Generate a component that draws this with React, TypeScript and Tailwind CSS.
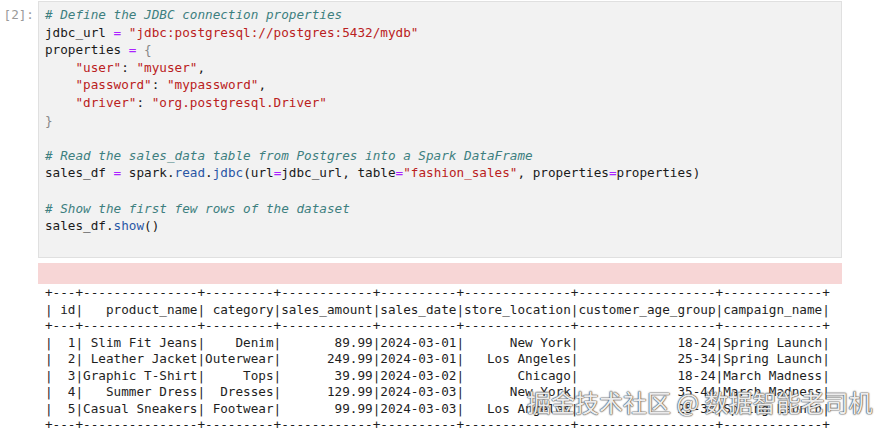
import React from "react";

const mono = "font-['DejaVu_Sans_Mono',monospace]";

const C = ({ children }: { children: React.ReactNode }) => (
  <span className="italic text-[#3d7f7f]">{children}</span>
);
const S = ({ children }: { children: React.ReactNode }) => (
  <span className="text-[#ba2121]">{children}</span>
);
const O = ({ children }: { children: React.ReactNode }) => (
  <span className="text-[#aa22ff]">{children}</span>
);
const P = ({ children }: { children: React.ReactNode }) => (
  <span className="text-[#2956a5]">{children}</span>
);
const B = ({ children }: { children: React.ReactNode }) => (
  <span className="text-[#888]">{children}</span>
);

const tableLines = [
  "+---+---------------+---------+------------+----------+--------------+------------------+-------------+",
  "| id|   product_name| category|sales_amount|sales_date|store_location|customer_age_group|campaign_name|",
  "+---+---------------+---------+------------+----------+--------------+------------------+-------------+",
  "|  1| Slim Fit Jeans|    Denim|       89.99|2024-03-01|      New York|             18-24|Spring Launch|",
  "|  2| Leather Jacket|Outerwear|      249.99|2024-03-01|   Los Angeles|             25-34|Spring Launch|",
  "|  3|Graphic T-Shirt|     Tops|       39.99|2024-03-02|       Chicago|             18-24|March Madness|",
  "|  4|   Summer Dress|  Dresses|      129.99|2024-03-03|      New York|             35-44|March Madness|",
  "|  5|Casual Sneakers| Footwear|       99.99|2024-03-03|   Los Angeles|             25-34|Spring Launch|",
  "+---+---------------+---------+------------+----------+--------------+------------------+-------------+",
];

export default function App() {
  return (
    <div className="relative w-[881px] h-[431px] overflow-hidden bg-white">
      <div className="flex pt-[1px]">
        <div
          className={`w-[38px] shrink-0 pr-[4px] pt-[5px] text-right text-[12.66px] leading-[17.6px] text-[#9a9a9a] ${mono}`}
        >
          [2]:
        </div>
        <div
          className={`w-[804px] h-[257px] shrink-0 border border-[#e0e0e0] bg-[#f2f2f2] pl-[6px] pt-[4px] text-[12.66px] leading-[17.6px] text-[#1a1a1a] whitespace-pre ${mono}`}
        >
          <div><C># Define the JDBC connection properties</C></div>
          <div>jdbc_url <O>=</O> <S>"jdbc:postgresql://postgres:5432/mydb"</S></div>
          <div>properties <O>=</O> <B>{"{"}</B></div>
          <div>    <S>"user"</S>: <S>"myuser"</S>,</div>
          <div>    <S>"password"</S>: <S>"mypassword"</S>,</div>
          <div>    <S>"driver"</S>: <S>"org.postgresql.Driver"</S></div>
          <div><B>{"}"}</B></div>
          <div> </div>
          <div><C># Read the sales_data table from Postgres into a Spark DataFrame</C></div>
          <div>sales_df <O>=</O> spark.<P>read</P>.<P>jdbc</P>(url<O>=</O>jdbc_url, table<O>=</O><S>"fashion_sales"</S>, properties<O>=</O>properties)</div>
          <div> </div>
          <div><C># Show the first few rows of the dataset</C></div>
          <div>sales_df.<P>show</P>()</div>
        </div>
      </div>
      <div className="ml-[38px] mt-[5px] w-[804px] h-[21px] bg-[#f7d6d6]" />
      <div
        className={`ml-[45px] mt-[1px] text-[12.66px] leading-[16.5px] text-[#1e1e1e] whitespace-pre ${mono}`}
      >
        {tableLines.map((l, i) => (
          <div key={i}>{l}</div>
        ))}
      </div>
      <div className="absolute left-[527px] top-[386px] whitespace-pre text-[24px] leading-[32px] text-white/90 font-['Noto_Sans_CJK_SC',sans-serif] [text-shadow:0_0_1px_#444,0_0_1px_#444,0_0_2px_#666]">
        掘金技术社区 @ 数据智能老司机
      </div>
    </div>
  );
}
